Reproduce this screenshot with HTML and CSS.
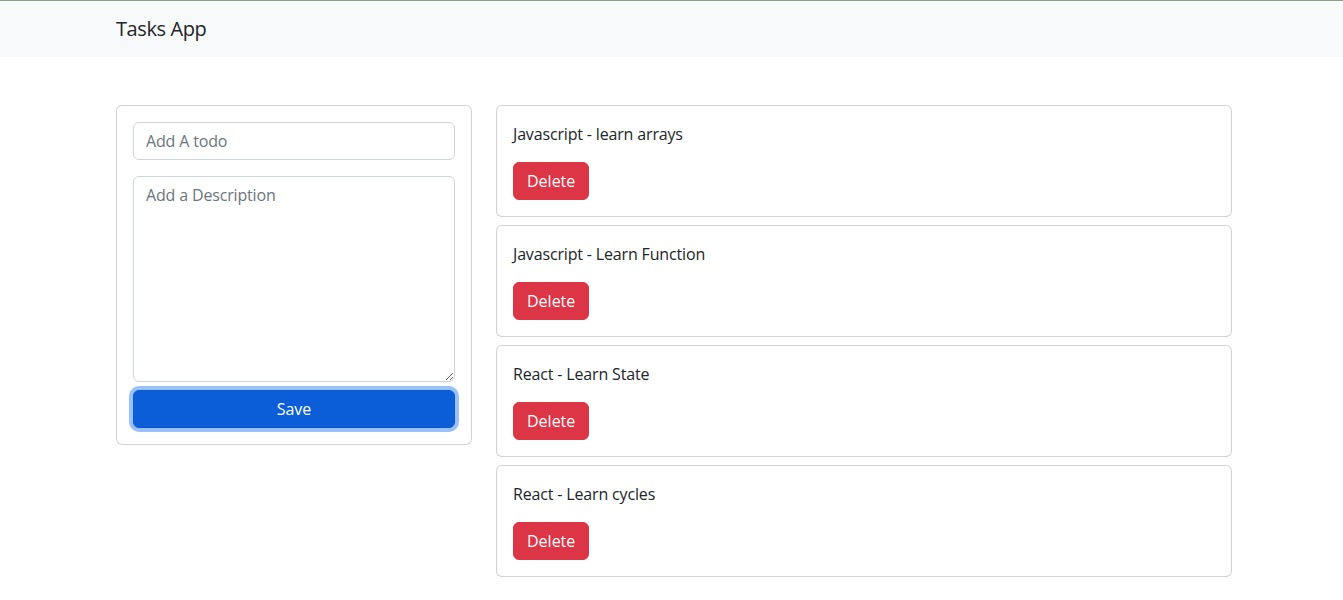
FILE: index.html
```html
<!DOCTYPE html>
<html lang="en">
<head>
<meta charset="utf-8">
<title>Tasks App</title>
<link rel="stylesheet" href="styles.css">
</head>
<body>
<nav class="navbar">
  <div class="container">
    <span class="brand">Tasks App</span>
  </div>
</nav>
<main class="container main">
  <div class="row">
    <div class="col-form">
      <div class="card">
        <div class="card-body">
          <input class="control" type="text" placeholder="Add A todo">
          <textarea class="control area" placeholder="Add a Description"></textarea>
          <button class="btn btn-primary">Save</button>
        </div>
      </div>
    </div>
    <div class="col-list">
      <div class="card task">
        <div class="card-body">
          <p class="title">Javascript - learn arrays</p>
          <button class="btn btn-danger">Delete</button>
        </div>
      </div>
      <div class="card task">
        <div class="card-body">
          <p class="title">Javascript - Learn Function</p>
          <button class="btn btn-danger">Delete</button>
        </div>
      </div>
      <div class="card task">
        <div class="card-body">
          <p class="title">React - Learn State</p>
          <button class="btn btn-danger">Delete</button>
        </div>
      </div>
      <div class="card task">
        <div class="card-body">
          <p class="title">React - Learn cycles</p>
          <button class="btn btn-danger">Delete</button>
        </div>
      </div>
    </div>
  </div>
</main>
</body>
</html>
```

FILE: styles.css
```css
* { box-sizing: border-box; }
html, body { margin: 0; padding: 0; }
body {
  font-family: "Open Sans", "Noto Sans", sans-serif;
  font-size: 16px;
  line-height: 24px;
  letter-spacing: -0.01em;
  color: #212529;
  background: #fff;
  border-top: 1px solid #86a27c;
}
.container {
  width: 1116px;
  margin-left: 116px;
}
.navbar {
  background: #f8f9fa;
  padding: 8px 0;
}
.brand {
  display: block;
  font-size: 20px;
  line-height: 30px;
  padding: 5px 0;
  letter-spacing: -0.02em;
  color: #212529;
}
.main { padding-top: 48px; }
.row {
  display: flex;
  gap: 24px;
  align-items: flex-start;
}
.col-form { width: 356px; flex: none; }
.col-list { width: 736px; flex: none; }
.card {
  border: 1px solid rgba(0,0,0,.175);
  border-radius: 6px;
  background: #fff;
}
.task { margin-bottom: 8px; }
.card-body { padding: 16px; }
.control {
  display: block;
  width: 100%;
  height: 38px;
  padding: 6px 12px;
  font: inherit;
  letter-spacing: inherit;
  color: #212529;
  border: 1px solid #ced4da;
  border-radius: 6px;
  background: #fff;
  margin: 0 0 16px;
  outline: none;
}
.control::placeholder { color: #6c757d; }
.area {
  height: 206px;
  margin-bottom: 8px;
  resize: vertical;
}
.btn {
  display: inline-block;
  font: inherit;
  letter-spacing: 0;
  padding: 6px 12px;
  border: 1px solid transparent;
  border-radius: 6px;
  color: #fff;
  height: 38px;
  cursor: pointer;
}
.btn-primary {
  display: block;
  width: 100%;
  background: #0b5ed7;
  border-color: #0a58ca;
  box-shadow: 0 0 0 4px rgba(49,132,253,.5);
}
.btn-danger {
  background: #dc3545;
  border-color: #dc3545;
  padding: 6px 13px;
}
.title { margin: 0 0 16px; }
```
